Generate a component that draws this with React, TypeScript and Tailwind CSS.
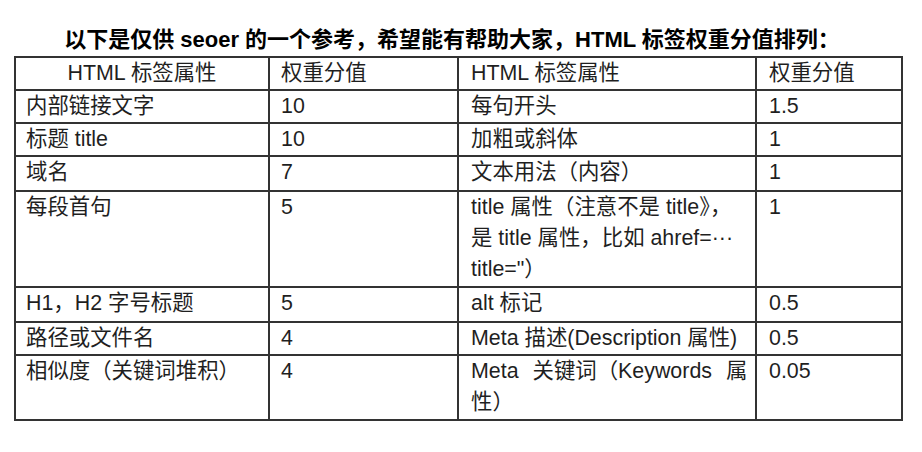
const rows: { a: React.ReactNode; b: string; c: React.ReactNode; d: string; h: string }[] = [
  { a: '内部链接文字', b: '10', c: '每句开头', d: '1.5', h: 'h-[33px]' },
  { a: '标题 title', b: '10', c: '加粗或斜体', d: '1', h: 'h-[33px]' },
  { a: '域名', b: '7', c: '文本用法（内容）', d: '1', h: 'h-[35px]' },
  {
    a: '每段首句',
    b: '5',
    c: (
      <>
        title 属性（注意不是 title》，
        <br />
        是 title 属性，比如 ahref=···
        <br />
        title="）
      </>
    ),
    d: '1',
    h: 'h-[96px]',
  },
  { a: 'H1，H2 字号标题', b: '5', c: 'alt 标记', d: '0.5', h: 'h-[35px]' },
  { a: '路径或文件名', b: '4', c: 'Meta 描述(Description 属性)', d: '0.5', h: 'h-[33px]' },
  {
    a: '相似度（关键词堆积）',
    b: '4',
    c: (
      <>
        <span className="[word-spacing:8px]">Meta 关键词（Keywords 属</span>
        <br />
        性）
      </>
    ),
    d: '0.05',
    h: 'h-[65px]',
  },
]

const cell = 'border-2 border-[#333] align-top leading-[31px]'

export default function App() {
  return (
    <div className="w-[922px] h-[452px] bg-white text-[#1f1f1f] font-['Liberation_Sans','Noto_Sans_CJK_SC',sans-serif] text-[21.4px]">
      <div className="pt-[24px] pr-[18px] text-center font-bold text-[22px] leading-[32px] text-black">
        以下是仅供 seoer 的一个参考，希望能有帮助大家，HTML 标签权重分值排列：
      </div>
      <table className="ml-[14px] w-[887px] border-collapse table-fixed">
        <colgroup>
          <col className="w-[254px]" />
          <col className="w-[189px]" />
          <col className="w-[298px]" />
          <col className="w-[146px]" />
        </colgroup>
        <tbody>
          <tr className="h-[33px]">
            <td className={`${cell} text-center`}>HTML 标签属性</td>
            <td className={`${cell} pl-[11px]`}>权重分值</td>
            <td className={`${cell} pl-[12px]`}>HTML 标签属性</td>
            <td className={`${cell} pl-[12px]`}>权重分值</td>
          </tr>
          {rows.map((r, i) => (
            <tr key={i} className={r.h}>
              <td className={`${cell} pl-[10px]`}>{r.a}</td>
              <td className={`${cell} pl-[11px]`}>{r.b}</td>
              <td className={`${cell} pl-[12px] whitespace-nowrap`}>{r.c}</td>
              <td className={`${cell} pl-[12px]`}>{r.d}</td>
            </tr>
          ))}
        </tbody>
      </table>
    </div>
  )
}
